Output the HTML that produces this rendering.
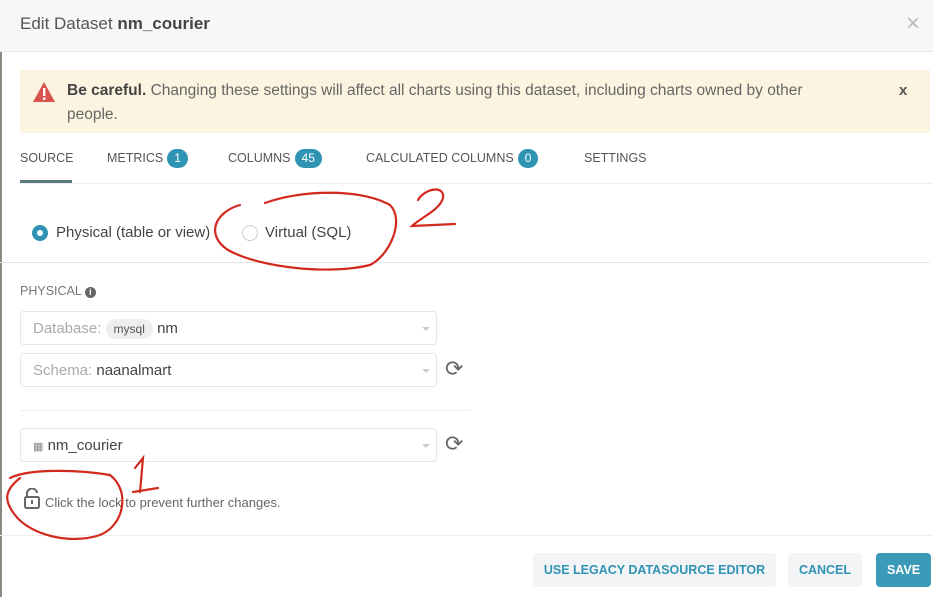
<!DOCTYPE html>
<html><head><meta charset="utf-8"><style>
*{box-sizing:border-box;margin:0;padding:0}
body{width:933px;height:597px;overflow:hidden;background:#fff;font-family:"Liberation Sans",sans-serif;color:#333;position:relative}
.abs{position:absolute}
.hdr{left:0;top:0;width:933px;height:52px;background:#f7f7f7;border-bottom:1px solid #e8e8e8}
.sel{position:absolute;left:20px;width:417px;height:34px;border:1px solid #e6e6e6;border-radius:4px;font-size:15px;color:#aaa;padding:8px 12px}
.sel:after{content:"";position:absolute;right:6px;top:15px;border:4px solid transparent;border-top-color:#ccc}
.badge{display:inline-block;background:#2f93b4;color:#fff;border-radius:10px;font-size:12px;height:19px;line-height:19px;padding:0 7px;margin-left:4px}
.tab{position:absolute;top:148px;height:20px;line-height:20px;font-size:12.5px;color:#555;display:flex;align-items:center}
.btn{position:absolute;top:553px;height:34px;border-radius:4px;font-size:12.5px;font-weight:bold;color:#2f93b4;background:#f3f4f5;text-align:center;line-height:34px}
</style></head><body>
<div class="abs hdr"></div>
<div class="abs" style="left:0;top:52px;width:2px;height:545px;background:#8a8a80"></div>
<div class="abs" style="left:20px;top:14px;font-size:17px;color:#555">Edit Dataset <b style="color:#444">nm_courier</b></div>
<div class="abs" style="left:906px;top:10px;font-size:24px;color:#bbb">×</div>
<div class="abs" style="left:20px;top:70px;width:910px;height:63px;background:#fcf4e1"></div>
<svg class="abs" style="left:32px;top:81px" width="24" height="22"><path d="M12 1 L23 21 L1 21 Z" fill="#d9534f"/><rect x="11" y="7" width="2.4" height="8" fill="#fff"/><rect x="11" y="16.5" width="2.4" height="2.4" fill="#fff"/></svg>
<div class="abs" style="left:67px;top:79px;width:800px;font-size:15.5px;line-height:24px;color:#666;white-space:nowrap"><b style="color:#444">Be careful.</b> Changing these settings will affect all charts using this dataset, including charts owned by other<br>people.</div>
<div class="abs" style="left:899px;top:82px;font-size:15px;font-weight:bold;color:#555">x</div>
<div class="tab" style="left:20px">SOURCE</div>
<div class="tab" style="left:107px">METRICS<span class="badge">1</span></div>
<div class="tab" style="left:228px">COLUMNS<span class="badge">45</span></div>
<div class="tab" style="left:366px">CALCULATED COLUMNS<span class="badge">0</span></div>
<div class="tab" style="left:584px">SETTINGS</div>
<div class="abs" style="left:20px;top:180px;width:52px;height:3px;background:#5a7a80"></div>
<div class="abs" style="left:20px;top:183px;width:913px;height:1px;background:#eee"></div>
<div class="abs" style="left:32px;top:225px;width:16px;height:16px;border-radius:50%;background:#2f93b4"><div style="margin:5px;width:6px;height:6px;border-radius:50%;background:#fff"></div></div>
<div class="abs" style="left:56px;top:224px;font-size:15px;color:#444">Physical (table or view)</div>
<div class="abs" style="left:242px;top:225px;width:16px;height:16px;border-radius:50%;border:1px solid #ccc"></div>
<div class="abs" style="left:265px;top:224px;font-size:15px;color:#444">Virtual (SQL)</div>
<div class="abs" style="left:0;top:262px;width:930px;height:1px;background:#e6e6e6"></div>
<div class="abs" style="left:20px;top:284px;font-size:12.5px;color:#777">PHYSICAL <span style="display:inline-block;width:11px;height:11px;border-radius:50%;background:#666;color:#fff;font-size:9px;text-align:center;line-height:11px;font-weight:bold">i</span></div>
<div class="sel" style="top:311px">Database: <span style="background:#eee;color:#555;font-size:12px;padding:3px 8px;border-radius:10px">mysql</span> <span style="color:#444">nm</span></div>
<div class="sel" style="top:353px">Schema: <span style="color:#444">naanalmart</span></div>
<div class="abs" style="left:445px;top:356px;font-size:22px;color:#666">⟳</div>
<div class="abs" style="left:20px;top:410px;width:450px;height:1px;background:#eee"></div>
<div class="sel" style="top:428px;color:#444"><span style="font-size:11px;color:#888">▦</span> nm_courier</div>
<div class="abs" style="left:445px;top:431px;font-size:22px;color:#666">⟳</div>
<svg class="abs" style="left:23px;top:488px" width="18" height="22"><path d="M4 9 V6 a5 5 0 0 1 10 -1" fill="none" stroke="#666" stroke-width="2"/><rect x="2" y="9" width="14" height="11" rx="1.5" fill="none" stroke="#666" stroke-width="2"/><rect x="8" y="12" width="2" height="4" fill="#666"/></svg>
<div class="abs" style="left:45px;top:495px;font-size:13px;color:#666">Click the lock to prevent further changes.</div>
<div class="abs" style="left:0;top:535px;width:933px;height:1px;background:#eee"></div>
<div class="btn" style="left:533px;width:243px">USE LEGACY DATASOURCE EDITOR</div>
<div class="btn" style="left:788px;width:74px">CANCEL</div>
<div class="btn" style="left:876px;width:55px;background:#3a9ab8;color:#fff">SAVE</div>
<svg class="abs" style="left:0;top:0" width="933" height="597" fill="none" stroke="#d2291f" stroke-width="2.2" stroke-linecap="round">
<path d="M265 203 C300 190 360 188 390 205 C405 220 390 255 370 265 C330 275 260 268 228 250 C205 235 215 212 240 205"/>
<path d="M418 200 C425 188 445 185 443 198 C440 210 420 218 412 226 L455 224"/>
<path d="M10 478 C30 468 80 470 110 475 C130 490 125 525 100 535 C70 545 30 535 15 515 C3 500 5 490 20 478"/>
<path d="M135 468 L143 458 L140 492 M133 492 L158 488"/>
</svg>
</body></html>
